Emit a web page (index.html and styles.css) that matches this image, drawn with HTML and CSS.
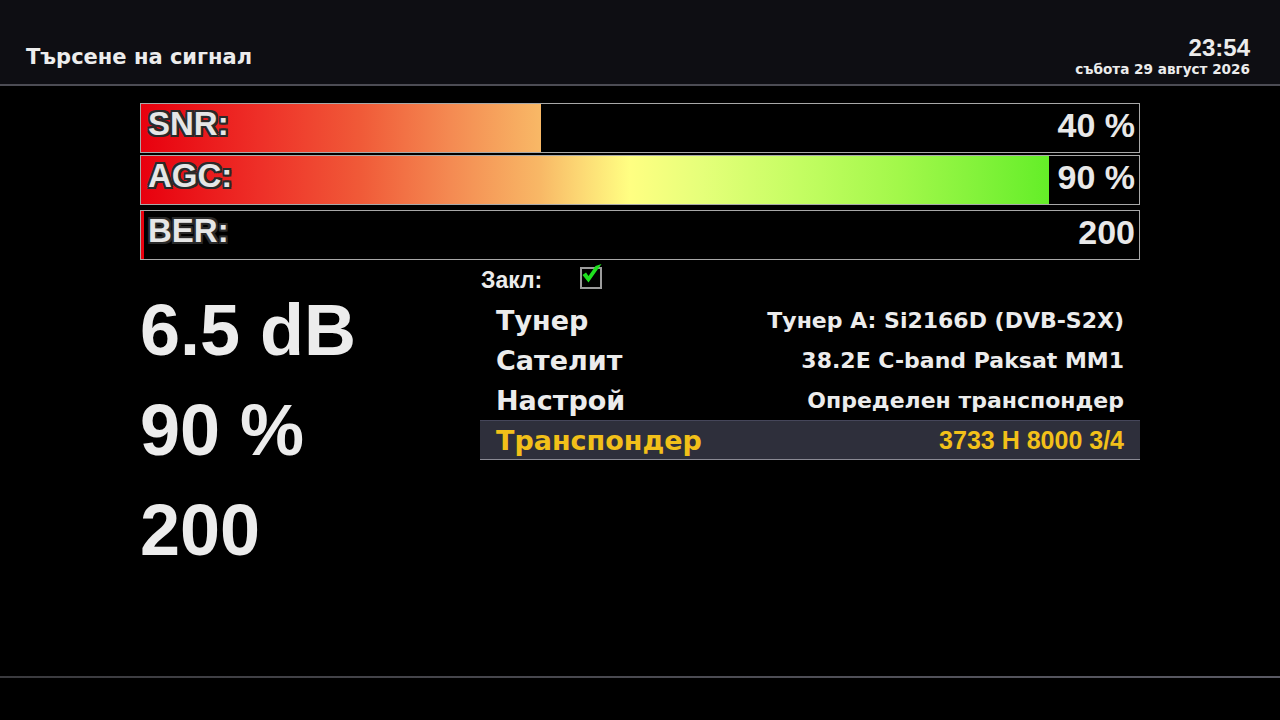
FILE: index.html
```html
<!DOCTYPE html>
<html lang="bg">
<head>
<meta charset="utf-8">
<title>Търсене на сигнал</title>
<link rel="stylesheet" href="styles.css">
</head>
<body>
<div class="screen">
  <header class="topbar">
    <div class="title">Търсене на сигнал</div>
    <div class="clock">
      <div class="time">23:54</div>
      <div class="date">събота 29 август 2026</div>
    </div>
  </header>

  <main class="content">
    <div class="bars">
      <div class="bar bar-snr" style="--p:40.1%">
        <span class="bar-label">SNR:</span>
        <span class="bar-value">40 %</span>
      </div>
      <div class="bar bar-agc" style="--p:91%">
        <span class="bar-label">AGC:</span>
        <span class="bar-value">90 %</span>
      </div>
      <div class="bar bar-ber">
        <span class="bar-label">BER:</span>
        <span class="bar-value">200</span>
      </div>
    </div>

    <div class="details">
      <div class="big">
        <div class="big-line">6.5 dB</div>
        <div class="big-line">90 %</div>
        <div class="big-line">200</div>
      </div>
      <div class="info">
        <div class="lock">
          <span class="lock-label">Закл:</span>
          <span class="checkbox">
            <svg viewBox="0 0 24 24" width="24" height="24">
              <path d="M3.5 12 L9.5 19.5 L22.5 1 L16.5 3 L9.5 13 L7 9.5 Z" fill="#1fe01f"/>
            </svg>
          </span>
        </div>
        <div class="row"><span class="row-label">Тунер</span><span class="row-value">Тунер A: Si2166D (DVB-S2X)</span></div>
        <div class="row"><span class="row-label">Сателит</span><span class="row-value">38.2E C-band Paksat MM1</span></div>
        <div class="row"><span class="row-label">Настрой</span><span class="row-value">Определен транспондер</span></div>
        <div class="row row-active"><span class="row-label">Транспондер</span><span class="row-value">3733 H 8000 3/4</span></div>
      </div>
    </div>
  </main>

  <footer class="bottombar"></footer>
</div>
</body>
</html>
```

FILE: styles.css
```css
html, body {
  margin: 0;
  padding: 0;
  background: #000;
}

.screen {
  width: 1280px;
  height: 720px;
  overflow: hidden;
  background: #000;
  font-family: "Liberation Sans", Arial, sans-serif;
  color: #ececec;
  display: flex;
  flex-direction: column;
}

.topbar {
  height: 86px;
  box-sizing: border-box;
  background: #0e0e13;
  border-bottom: 2px solid #4c4c54;
  display: flex;
  justify-content: space-between;
  align-items: flex-end;
  padding: 0 30px 6px 26px;
}

.title {
  font-family: "DejaVu Sans", "Liberation Sans", sans-serif;
  font-size: 21px;
  font-weight: bold;
  color: #ececec;
  padding-bottom: 9px;
}

.clock {
  text-align: right;
  font-weight: bold;
  color: #ececec;
}

.time {
  font-size: 24px;
  line-height: 24px;
}

.date {
  font-family: "DejaVu Sans", "Liberation Sans", sans-serif;
  font-size: 13.6px;
  line-height: 18px;
}

.content {
  flex: 1;
  padding: 17px 0 0 140px;
}

.bars {
  width: 1000px;
}

.bar {
  height: 50px;
  box-sizing: border-box;
  border: 1px solid #a8a8a8;
  display: flex;
  justify-content: space-between;
  align-items: center;
  padding: 0 4px 0 7px;
  background:
    linear-gradient(to right, transparent var(--p), #000 var(--p)),
    linear-gradient(to right, #e8000e 0%, #ee3028 12%, #f05a38 22%, #f48a52 31%, #f8b866 40%, #fcd874 44%, #ffff82 49%, #e6ff7a 56%, #c4fd62 66%, #a2f84a 76%, #82f23a 84%, #64ee28 91%, #60ee24 100%);
}

.bar-agc {
  margin-top: 2px;
}

.bar-ber {
  margin-top: 5px;
  background: linear-gradient(to right, #e8000e 3px, #000 3px);
}

.bar-label {
  font-size: 33px;
  font-weight: bold;
  color: #e6e6e6;
  text-shadow:
    -2px -2px 0 #2a2a2a, 2px -2px 0 #2a2a2a, -2px 2px 0 #2a2a2a, 2px 2px 0 #2a2a2a,
    0 -2px 0 #2a2a2a, 0 2px 0 #2a2a2a, -2px 0 0 #2a2a2a, 2px 0 0 #2a2a2a;
  margin-top: -8px;
}

.bar-value {
  font-size: 34px;
  font-weight: bold;
  color: #e8e8e8;
  margin-top: -6px;
}

.details {
  display: flex;
  width: 1000px;
}

.big {
  width: 340px;
  padding-top: 20px;
}

.big-line {
  font-size: 72px;
  font-weight: bold;
  line-height: 100px;
  color: #ececec;
}

.info {
  width: 660px;
}

.lock {
  height: 40px;
  display: flex;
  align-items: center;
  gap: 38px;
  padding: 0 0 0 1px;
}

.lock-label {
  font-size: 23px;
  font-weight: bold;
  color: #ececec;
}

.checkbox {
  position: relative;
  width: 18px;
  height: 18px;
  border: 2px solid #9c9c9c;
  margin-top: -4px;
}

.checkbox svg {
  position: absolute;
  left: -3px;
  top: -6px;
}

.row {
  height: 40px;
  box-sizing: border-box;
  display: flex;
  justify-content: space-between;
  align-items: center;
  padding: 0 16px;
}

.row-label {
  font-family: "DejaVu Sans", "Liberation Sans", sans-serif;
  font-size: 27px;
  font-weight: bold;
  color: #ececec;
}

.row-value {
  font-family: "DejaVu Sans", "Liberation Sans", sans-serif;
  font-size: 22px;
  font-weight: bold;
  color: #ececec;
}

.row-active {
  background: #2e2f3b;
  border-top: 1px solid #45465a;
  border-bottom: 1px solid #8a8a94;
}

.row-active .row-label,
.row-active .row-value {
  color: #f2c019;
}

.row-active .row-value {
  font-family: "Liberation Sans", Arial, sans-serif;
  font-size: 25px;
}

.bottombar {
  height: 2px;
  margin-bottom: 42px;
  background: linear-gradient(to right, #3a3a3e, #5a5a64);
}
```
